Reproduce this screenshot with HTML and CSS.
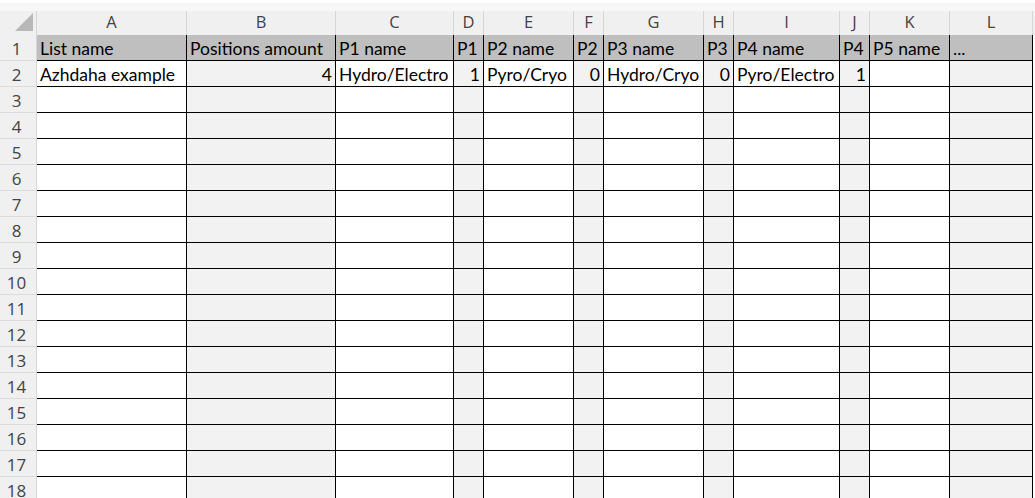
FILE: index.html
```html
<!DOCTYPE html>
<html lang="en">
<head>
    <meta charset="UTF-8">
    <meta name="viewport" content="width=device-width, initial-scale=1.0">
    <title>Sheet1</title>
    <link rel="stylesheet" href="styles.css">
</head>
<body>

<!-- Worksheet grid -->
<div class="sheet">
    <div class="top-strip"></div>

    <div class="grid" id="grid">
        <!-- Column letters -->
        <div class="corner"><span class="corner-tri"></span></div>
        <div class="col-head">A</div>
        <div class="col-head">B</div>
        <div class="col-head">C</div>
        <div class="col-head">D</div>
        <div class="col-head">E</div>
        <div class="col-head">F</div>
        <div class="col-head">G</div>
        <div class="col-head">H</div>
        <div class="col-head">I</div>
        <div class="col-head">J</div>
        <div class="col-head">K</div>
        <div class="col-head">L</div>
        <div class="col-head col-rest"></div>

        <!-- Row 1: titles -->
        <div class="row-head">1</div>
        <div class="cell title">List name</div>
        <div class="cell title">Positions amount</div>
        <div class="cell title">P1 name</div>
        <div class="cell title">P1</div>
        <div class="cell title">P2 name</div>
        <div class="cell title">P2</div>
        <div class="cell title">P3 name</div>
        <div class="cell title">P3</div>
        <div class="cell title">P4 name</div>
        <div class="cell title">P4</div>
        <div class="cell title">P5 name</div>
        <div class="cell title">...</div>
        <div class="rest"></div>

        <!-- Row 2: example -->
        <div class="row-head">2</div>
        <div class="cell">Azhdaha example</div>
        <div class="cell shade num">4</div>
        <div class="cell">Hydro/Electro</div>
        <div class="cell shade num">1</div>
        <div class="cell">Pyro/Cryo</div>
        <div class="cell shade num">0</div>
        <div class="cell">Hydro/Cryo</div>
        <div class="cell shade num">0</div>
        <div class="cell">Pyro/Electro</div>
        <div class="cell shade num">1</div>
        <div class="cell"></div>
        <div class="cell shade"></div>
        <div class="rest"></div>
    </div>
</div>

<script>
    // empty rows 3..18, odd columns (B, D, F...) are shaded
    const grid = document.getElementById('grid');
    for (let r = 3; r <= 18; r++) {
        const head = document.createElement('div');
        head.className = 'row-head';
        head.textContent = r;
        grid.appendChild(head);
        for (let c = 0; c < 12; c++) {
            const cell = document.createElement('div');
            cell.className = c % 2 === 1 ? 'cell shade' : 'cell';
            grid.appendChild(cell);
        }
        const rest = document.createElement('div');
        rest.className = 'rest';
        grid.appendChild(rest);
    }
</script>
</body>
</html>
```

FILE: styles.css
```css
body {
    margin: 0;
    background-color: #ffffff;
    font-family: 'Lato', 'Open Sans', sans-serif;
    overflow: hidden;
}

.sheet {
    width: 1035px;
    height: 498px;
    overflow: hidden;
}

/* thin band above the column letters */
.top-strip {
    height: 11px;
    background-color: #f7f7f7;
    border-top: 3px solid #ffffff;
    box-sizing: border-box;
}

.grid {
    display: grid;
    grid-template-columns: 37px 150px 149px 118px 30px 90px 30px 100px 30px 106px 30px 80px 83px 3px;
    grid-template-rows: 24px;
    grid-auto-rows: 26px;
}

/* Headers */
.corner,
.col-head,
.row-head {
    background-color: #f0f0f0;
    color: #444444;
    box-sizing: border-box;
    font-family: 'Open Sans', sans-serif;
}

.corner {
    position: relative;
    border-right: 1px solid #d6d6d6;
}

.corner-tri {
    position: absolute;
    right: 3px;
    bottom: 4px;
    width: 0;
    height: 0;
    border-left: 18px solid transparent;
    border-bottom: 18px solid #b8b8b8;
}

.col-head {
    border-right: 1px solid #d6d6d6;
    text-align: center;
    font-size: 16.5px;
    line-height: 22px;
}

.col-rest {
    border-right: none;
}

.row-head {
    border-right: 1px solid #d6d6d6;
    border-bottom: 1px solid #dcdcdc;
    text-align: center;
    font-size: 17px;
    line-height: 27px;
    padding-right: 3px;
}

/* Cells */
.cell {
    box-sizing: border-box;
    border-right: 1px solid #000000;
    border-bottom: 1px solid #000000;
    background-color: #ffffff;
    color: #000000;
    font-size: 17.5px;
    line-height: 28px;
    padding-left: 3px;
    white-space: nowrap;
    overflow: hidden;
}

.cell.title {
    background-color: #bfbfbf;
}

.cell.shade {
    background-color: #f2f2f2;
}

.cell.num {
    text-align: right;
    padding-right: 3px;
}

.rest {
    background-color: #ffffff;
}
```
